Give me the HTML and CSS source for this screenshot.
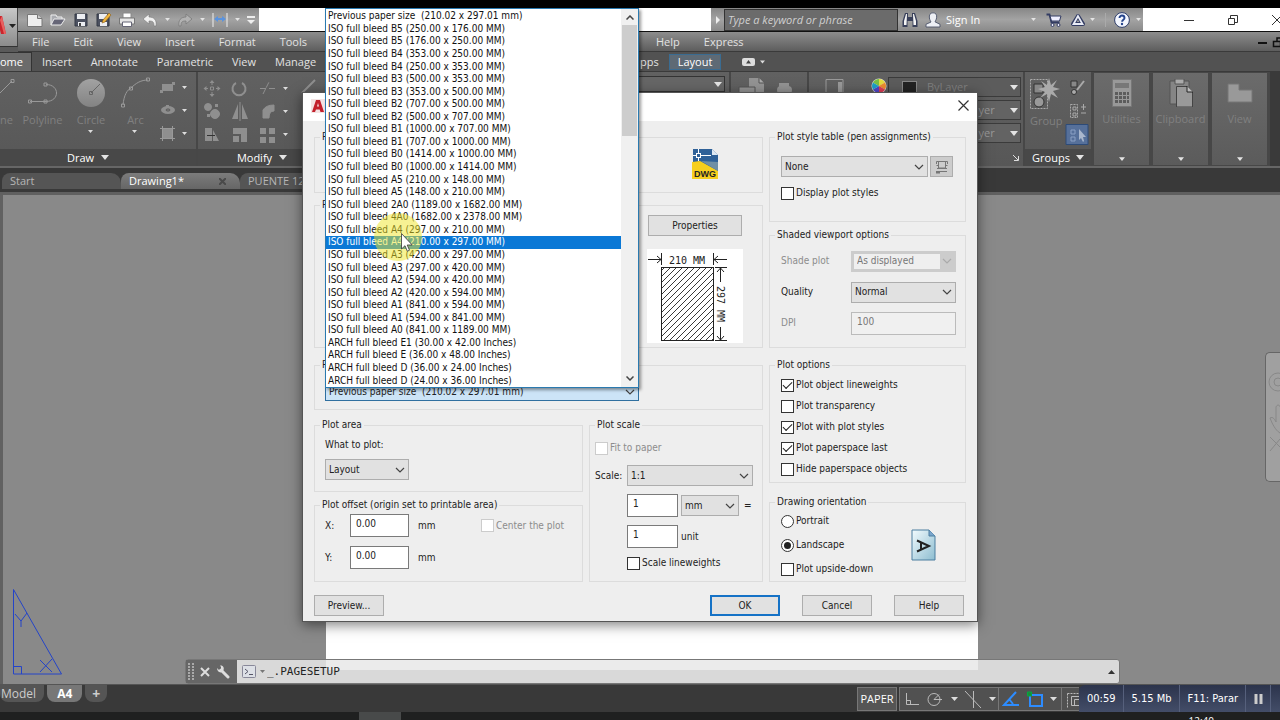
FILE: index.html
```html
<!DOCTYPE html>
<html lang="en">
<head>
<meta charset="utf-8">
<title>Page Setup</title>
<link rel="stylesheet" href="styles.css">
</head>
<body>
<svg class="defs" aria-hidden="true">
  <defs>
    <symbol id="caret" viewBox="0 0 8 5"><path d="M0 0h8L4 5z" fill="#e4e4e4"/></symbol>
    <symbol id="chev" viewBox="0 0 10 6"><path d="M1 1l4 4 4-4" fill="none" stroke="currentColor" stroke-width="1.2"/></symbol>
    <linearGradient id="ig" x1="0" y1="0" x2="0" y2="1"><stop offset="0" stop-color="#a2a2a2"/><stop offset="1" stop-color="#838383"/></linearGradient>
  </defs>
</svg>

<header class="app-head">
  <button class="app-btn" aria-label="Application menu">
    <svg width="18" height="30" viewBox="0 0 18 30"><path d="M0 4l2 0 4 18H1L0 18z" fill="#c9252c"/><path d="M2 4l4 18 -2 0L0 8z" fill="#e8605f"/><path d="M9 12h7l-3.500 4z" fill="#222"/></svg>
  </button>
  <div class="title-row">
    <div class="qat">
      <button aria-label="New"><svg width="16" height="16" viewBox="0 0 16 16"><path d="M.5 2.500h10l4.500 4v8H.5z" fill="#eee" stroke="#777"/><path d="M10.500 2.500v4h4.500" fill="#ccc" stroke="#777"/></svg></button>
      <button aria-label="Open"><svg width="16" height="16" viewBox="0 0 16 16"><path d="M1 13V3h5l1 2h5v3" fill="#a9abb0" stroke="#eee"/><path d="M1 13l3-6h11l-4 6z" fill="#667" stroke="#eee"/></svg></button>
      <button aria-label="Save"><svg width="16" height="16" viewBox="0 0 16 16"><path d="M2 2h12v12H2z" fill="#4c5160" stroke="#333845"/><path d="M4 2h8v5H4zM5 10h7v4H5z" fill="#eceef2"/><path d="M6 11h2v3H6z" fill="#444"/></svg></button>
      <button aria-label="Save as"><svg width="16" height="16" viewBox="0 0 16 16"><path d="M1 2h12v12H1z" fill="#4c5160" stroke="#333845"/><path d="M3 2h8v5H3zM4 10h7v4H4z" fill="#eceef2"/><path d="M6 11l1-3 6-7 2 2-6 7z" fill="#f0b53c" stroke="#875a1c" stroke-width=".6"/></svg></button>
      <button aria-label="Print"><svg width="16" height="16" viewBox="0 0 16 16"><path d="M4 1h8v5H4z" fill="#fff" stroke="#888"/><path d="M.5 6h15v6H.5z" fill="#e6e6e6" stroke="#777"/><path d="M3.500 10h9v4.500h-9z" fill="#fff" stroke="#667"/></svg></button>
      <button aria-label="Undo"><svg width="16" height="16" viewBox="0 0 16 16"><path d="M1 7l6-5v3c5 0 8 3 7 9h-2c0-4-1-5-5-5v3z" fill="#f0f0f0" stroke="#777" stroke-width=".6"/></svg></button>
      <button class="slim" aria-label="Undo list"><svg width="5" height="3"><use href="#caret"/></svg></button>
      <button aria-label="Redo"><svg width="16" height="16" viewBox="0 0 16 16"><path d="M15 7L9 2v3c-5 0-8 3-7 9h2c0-4 1-5 5-5v3z" fill="#b2b2b2" stroke="#7a7a7a" stroke-width=".8"/></svg></button>
      <button class="slim" aria-label="Redo list"><svg width="5" height="3"><use href="#caret"/></svg></button>
      <button aria-label="Dimension"><svg width="16" height="16" viewBox="0 0 16 16"><path d="M1 1v14M15 1v14" stroke="#eee"/><path d="M2 7l4-3v2h4V4l4 3-4 3V8H6v2z" fill="#5b93dd"/></svg></button>
      <button class="slim" aria-label="Dimension list"><svg width="5" height="3"><use href="#caret"/></svg></button>
      <button class="slim wide" aria-label="Customize"><svg width="8" height="8" viewBox="0 0 8 8"><path d="M0 0h8v2H0zM0 4h8L4 8z" fill="#eee"/></svg></button>
    </div>
    <div class="title-gap"></div>
    <div class="info">
      <button class="info-arrow" aria-label="Collapse search"><svg width="4" height="8" viewBox="0 0 4 8"><path d="M0 0l4 4-4 4z" fill="#eee"/></svg></button>
      <input class="search" type="text" placeholder="Type a keyword or phrase" aria-label="Search">
      <button class="find" aria-label="Find"><svg width="16" height="16" viewBox="0 0 16 16"><path d="M3 1h3v4h4V1h3l2.500 8v6h-5V9h-5v6h-5V9z" fill="#39405a"/><path d="M4 2l1 0-.5 11H2V9zM11 2l1 0 2 7v4h-2.500z" fill="#f4f4f4"/></svg></button>
      <button class="sign"><svg width="16" height="16" viewBox="0 0 16 16"><path d="M8 .8c3 0 4 2 3.600 5-.3 2-1.200 3-1.600 4l5 2.500V15H1v-2.700L6 10C5.600 9 4.700 8 4.400 6 4 3 5 .8 8 .8z" fill="#eef0f5" stroke="#4a5168" stroke-width=".9"/></svg><span>Sign In</span><svg width="5" height="3"><use href="#caret"/></svg></button>
      <button aria-label="Store"><svg width="16" height="14" viewBox="0 0 16 14"><path d="M.5 1.500h3l2 8h8" fill="none" stroke="#333c63" stroke-width="1.800"/><path d="M4 3h11l-1.500 5H5.500z" fill="#eef" stroke="#333c63"/><circle cx="6.500" cy="12" r="1.500" fill="#eef" stroke="#333c63"/><circle cx="12.500" cy="12" r="1.500" fill="#eef" stroke="#333c63"/></svg></button>
      <button class="apps" aria-label="App store"><svg width="16" height="14" viewBox="0 0 16 14"><path d="M8 3L3 11h10z" fill="none" stroke="#333c63" stroke-width="4" stroke-linejoin="round"/><path d="M8 3L3.500 11h9z" fill="none" stroke="#e9ecf6" stroke-width="1.800"/></svg><svg width="5" height="3"><use href="#caret"/></svg></button>
      <button class="help" aria-label="Help"><svg width="16" height="16" viewBox="0 0 16 16"><circle cx="8" cy="8" r="7.400" fill="#f4f7ff" stroke="#2e3d69"/><path d="M5.500 6c0-3.300 5-3.200 5 0 0 1.700-2.400 1.800-2.400 3.700" fill="none" stroke="#26458d" stroke-width="1.900"/><circle cx="8" cy="12" r="1.200" fill="#26458d"/></svg><svg width="5" height="3"><use href="#caret"/></svg></button>
    </div>
    <div class="win">
      <button aria-label="Minimize"><svg width="10" height="10"><path d="M0 5.500h10" stroke="#333"/></svg></button>
      <button aria-label="Restore"><svg width="10" height="10"><path d="M.5 3.500h6v6h-6zM2.500 3.500v-3h7v7H6.500" fill="none" stroke="#333"/></svg></button>
      <button aria-label="Close"><svg width="10" height="10"><path d="M0 0l10 10M10 0L0 10" stroke="#333"/></svg></button>
    </div>
  </div>
  <nav class="menu">
    <div class="menu-first"><a href="#">File</a><a href="#">Edit</a><a href="#">View</a><a href="#">Insert</a><a href="#">Format</a><a href="#">Tools</a></div>
    <div class="menu-more"><a href="#">Help</a><a href="#">Express</a></div>
    <svg class="doc-ctl" width="22" height="12"><path d="M0 7h9" stroke="#111" stroke-width="2"/><path d="M15.500 5.500h7v5h-7zM19 5V2h5" fill="none" stroke="#111" stroke-width="1.500"/></svg>
  </nav>
</header>

<nav class="tabs">
  <div class="tabs-first"><a class="on" href="#">ome</a><a href="#">Insert</a><a href="#">Annotate</a><a href="#">Parametric</a><a href="#">View</a><a href="#">Manage</a></div>
  <div class="tabs-more"><a href="#">pps</a><a class="layout" href="#">Layout</a>
    <svg width="23" height="8" viewBox="0 0 23 8"><rect width="13" height="8" rx="2" fill="#ddd"/><path d="M4 5.500h5L6.500 2z" fill="#444"/><path d="M18 2.500h5l-2.500 3z" fill="#ddd"/></svg></div>
</nav>

<section class="ribbon">
  <div class="panel draw">
    <div class="tools">
      <svg width="196" height="74" viewBox="0 0 196 74" fill="none" stroke="#999">
        <path d="M0 21L12 9M11 7.500h3v3h-3zM30 29.500h16c14 0 14-17 0-17M28.500 28h3v3h-3zM44 28h3v3h-3zM44 11h3v3h-3z"/>
        <circle cx="91" cy="21" r="14" fill="url(#ig)" stroke="none"/><path d="M91 21l9-9M89.500 19.500h3v3h-3z" stroke="#666"/>
        <path d="M123 33c1-10 4-15 8-17 5-5 10-8 17-8M121.500 32h3v3h-3zM129.500 15h3v3h-3zM146.500 6h3v3h-3z"/>
        <g fill="#8f8f8f" stroke="none"><path d="M162 12h11v7h-11zM160 18h3v3h-3zM172 10h3v3h-3z"/><ellipse cx="168" cy="38" rx="7" ry="4"/><path d="M166 33h3v2h-3z"/><path d="M163 57h9v9h-9z"/></g>
        <ellipse cx="168" cy="38" rx="2" ry="1" stroke="#555"/><path d="M160 56.500h15M160 66.500h15M162.500 54v15M172.500 54v15"/>
        <g fill="#ddd" stroke="none"><path d="M88 58h5l-2.500 3zM132 58h5l-2.500 3zM182 14h5l-2.500 3zM182 37h5l-2.500 3zM182 60h5l-2.500 3z"/></g>
      </svg>
      <div class="captions"><span>ne</span><span>Polyline</span><span>Circle</span><span>Arc</span></div>
    </div>
    <button class="ptitle">Draw <svg width="8" height="5"><use href="#caret"/></svg></button>
  </div>
  <div class="panel modify">
    <svg class="tools" width="128" height="74" viewBox="0 0 128 74" fill="#8f8f8f" stroke="#8f8f8f">
      <path d="M14 8v4M14 19v4M6 15.500h4M18 15.500h4" /><path d="M11.500 10L14 7l2.500 3zM11.500 21l2.500 3 2.500-3zM8.500 13l-3 2.500 3 2.500zM19.500 13l3 2.500-3 2.500z" stroke="none"/><path d="M12.500 14h3v3h-3z" fill="none"/>
      <path d="M38 10a6.500 6.500 0 1 0 6 0" fill="none" stroke-width="2"/><path d="M62 15.500h6M65 21l6-12M71 15.500h7" stroke-dasharray="6 1" fill="none"/><path d="M104 20l13-13" stroke-width="2"/>
      <circle cx="10" cy="34" r="3.500"/><circle cx="17" cy="41" r="4.500"/><path d="M17 31h3v3h-3zM9 41h3v3H9z" stroke="none"/>
      <path d="M40 31v15h-6zM44 31v15h6z" stroke="none"/><path d="M42 29v19"/><path d="M65 45V37q3-5 11-5v6q-5 0-5 7z"/>
      <path d="M7 55h7v13H7zM15 57l6 11h-6z" stroke="none"/><path d="M9 62.500h8" stroke="#333"/><path d="M35 55h14v14h-6v-8h-8zM35 63h6v6h-6z" stroke="none"/>
      <path d="M62 55h6v6h-6zM71 55h6v6h-6zM62 64h6v6h-6zM71 64h6v6h-6z" stroke="none"/>
      <g fill="#ddd" stroke="none"><path d="M85 14h5l-2.500 3zM85 37h5l-2.500 3zM85 60h5l-2.500 3z"/></g>
    </svg>
    <button class="ptitle">Modify <svg width="8" height="5"><use href="#caret"/></svg></button>
  </div>
  <div class="panel fill"></div>
  <div class="panel layers"><div class="layer-box"><svg width="8" height="5"><use href="#caret"/></svg></div></div>
  <div class="panel block">
    <svg width="76" height="30" viewBox="0 0 76 30" fill="#939393"><path d="M18 6h10l5 5v16H18z"/><path d="M28 6v5h5" stroke="#555" fill="#aaa"/><path d="M8 15h16v14H8z" stroke="#555"/><path d="M48 11h10v8H48z"/><circle cx="50" cy="18" r="4"/><circle cx="57" cy="18" r="4"/></svg>
  </div>
  <div class="panel props">
    <svg width="78" height="30" viewBox="0 0 78 30"><path d="M17 7.500h17v22H17z" fill="none" stroke="#999"/><path d="M29 10h4v18h-4z" fill="#999"/><g transform="translate(70 14)"><circle r="7.500" fill="#ddd"/><path d="M0 0V-7A7 7 0 0 1 6 -3.500z" fill="#e5dd3d"/><path d="M0 0L6 -3.500A7 7 0 0 1 6 3.500z" fill="#ee8d2e"/><path d="M0 0L6 3.500A7 7 0 0 1 0 7z" fill="#e13d57"/><path d="M0 0V7A7 7 0 0 1 -6 3.500z" fill="#5147c9"/><path d="M0 0L-6 3.500A7 7 0 0 1 -6 -3.500z" fill="#1d9fc9"/><path d="M0 0L-6 -3.500A7 7 0 0 1 0 -7z" fill="#7ac144"/></g></svg>
    <div class="prop-rows">
      <button class="prop dim"><i class="swatch"></i><span>ByLayer</span><svg width="8" height="5"><use href="#caret"/></svg></button>
      <button class="prop"><span>ByLayer</span><svg width="8" height="5"><use href="#caret"/></svg></button>
      <button class="prop"><span>ByLayer</span><svg width="8" height="5"><use href="#caret"/></svg></button>
      <svg class="launch" width="6" height="6"><path d="M0 0l5 5M5.500 1v4.500H1" fill="none" stroke="#ddd"/></svg>
    </div>
  </div>
  <div class="panel groups">
    <svg class="tools" width="66" height="74" viewBox="0 0 66 74" fill="none" stroke="#aaa">
      <path d="M5.500 6.500h17v29h-17z" stroke-dasharray="2 1"/><path d="M9 11h9v9H9z" fill="#888" stroke="#333"/><circle cx="14" cy="29" r="5" fill="#999" stroke="#333"/>
      <path d="M24 5l2 7 6-5-4 7 7 2-7 2 5 7-7-4-2 8-2-8-7 4 5-6-7-3 7-2-4-6 6 4z" fill="#aaa" stroke="none"/>
      <path d="M46 8h6v6h-6z" fill="#888" stroke="#333"/><circle cx="49" cy="19" r="2.500" fill="#aaa" stroke="#333"/><path d="M52 17l7-9" stroke-width="2"/>
      <path d="M45.500 31.500h7v13h-7z" stroke-dasharray="2 1"/><path d="M48 34h3v3h-3zM48 40h3v3h-3zM56 34h5M58.500 31v6M56 40h5"/>
      <path d="M41 51.500h22v20H41z" fill="#56709a" stroke="#2d4b78"/><path d="M46 57h4v4h-4zM46 64h4v4h-4z" stroke="#8aa0c4"/><path d="M54 56v11l2-2 2 4 1-1-1-4h3z" fill="#a9b7cd" stroke="none"/>
    </svg>
    <span class="cap">Group</span>
    <button class="ptitle">Groups <svg width="8" height="5"><use href="#caret"/></svg></button>
  </div>
  <button class="panel solo"><svg width="20" height="28" viewBox="0 0 20 28"><path d="M.5.5h19v27H.5z" fill="#999" stroke="#777"/><path d="M3 4h14v5H3z" fill="#777"/><path d="M3 13h3v3H3zM7 13h3v3H7zM11 13h3v3h-3zM15 13h2v3h-2zM3 17h3v3H3zM7 17h3v3H7zM11 17h3v3h-3zM15 17h2v3h-2zM3 21h3v3H3zM7 21h3v3H7zM11 21h3v3h-3zM15 21h2v3h-2z" fill="#5c5c5c"/></svg><span>Utilities</span><svg class="down" width="6" height="4"><use href="#caret"/></svg></button>
  <button class="panel solo"><svg width="24" height="28" viewBox="0 0 24 28"><path d="M1 2h19v23H1z" fill="#858585" stroke="#555"/><path d="M6 0h9v5H6z" fill="#aaa" stroke="#555"/><path d="M7.500 7.500h11l5 5V28h-16z" fill="#999" stroke="#444"/><path d="M18 7v6h6" fill="#bbb" stroke="#222"/></svg><span>Clipboard</span><svg class="down" width="6" height="4"><use href="#caret"/></svg></button>
  <button class="panel solo"><svg width="26" height="28" viewBox="0 0 26 28"><path d="M1 5h11v6h13v12H1z" fill="#999" stroke="#777"/></svg><span>View</span><svg class="down" width="6" height="4"><use href="#caret"/></svg></button>
</section>

<nav class="files">
  <a href="#">Start</a>
  <a class="on" href="#">Drawing1*<svg width="7" height="7"><path d="M0 0l7 7M7 0L0 7" stroke="#4a4a4a" stroke-width="2"/></svg></a>
  <a href="#">PUENTE 12</a>
</nav>

<main class="canvas">
  <div class="paper"></div>
  <svg class="ucs" width="52" height="88" fill="none" stroke="#2444c8"><path d="M1.500 1.500v84.500h48zM1.500 78.500h8v7.500M3 26l6 7 6-8M9 33v6M28 72l12 12M28 84l12-13"/></svg>
  <div class="navbar"><svg width="14" height="90" viewBox="0 0 14 90" fill="none" stroke="#888"><circle cx="12" cy="17" r="9"/><circle cx="12" cy="17" r="4"/><path d="M14 68C9 65 6 58 4 53c3-2 5 2 6 4V42c1-3 4-2 4 0M4 72l10 10M4 86l10-12"/></svg></div>
  <div class="cmd">
    <div class="cmd-grip">
      <svg width="6" height="18"><path d="M1 0v18M5 0v18" stroke="#aaa" stroke-width="2" stroke-dasharray="2 1"/></svg>
      <svg width="10" height="10"><path d="M1 1l8 8M9 1L1 9" stroke="#ddd" stroke-width="2"/></svg>
      <svg width="14" height="14" viewBox="0 0 14 14"><path d="M5 5l7 7" stroke="#ddd" stroke-width="3" stroke-linecap="round"/><path d="M1 3l2 2 2-1V2L4 .5C7 0 9 3 7 6S1 7 1 3z" fill="#ddd"/></svg>
    </div>
    <label class="cmd-line"><svg width="24" height="14" viewBox="0 0 24 14"><rect x=".5" y=".5" width="13" height="12" rx="1" fill="#dde0e6" stroke="#889"/><path d="M3 4l3 2.500L3 9M7 9.500h4" fill="none" stroke="#556"/><path d="M18 5h5l-2.500 3z" fill="#777"/></svg><input type="text" value="_.PAGESETUP" aria-label="Command"><svg width="7" height="4"><path d="M0 4h7L3.500 0z" fill="#333"/></svg></label>
  </div>
</main>

<footer class="status">
  <nav class="sheets"><a href="#">Model</a><a class="on" href="#">A4</a><a class="plus" href="#">+</a></nav>
  <button class="paper-btn">PAPER</button>
  <div class="sgroup g1"><svg width="98" height="24" viewBox="0 0 98 24" fill="none" stroke="#bbb"><path d="M6.500 6v11.500H19M6 13.500h4.500V17"/><circle cx="34" cy="12.500" r="6"/><path d="M34 12.500h8M34 12.500l5-5"/><path d="M65 4l16 17M73.500 4v17"/><path d="M51 10h7l-3.500 4zM89 10h7l-3.500 4z" fill="#ddd" stroke="none"/></svg></div>
  <div class="sgroup g2"><svg width="62" height="24" viewBox="0 0 62 24" fill="none" stroke="#2d8cff" stroke-width="2"><path d="M17 5L5 18h15M10 12l4 5"/><path d="M31 8h12v11H31z"/><path d="M28.500 5h4v4h-4z" fill="#1c8b35" stroke="#0a4" stroke-width="1"/><path d="M51 10h7l-3.500 4z" fill="#ddd" stroke="none"/></svg></div>
  <div class="sgroup g3"><svg width="20" height="20" fill="none" stroke="#bbb"><path d="M5.500 4.500h14M5.500 4.500v14" stroke-dasharray="2 1"/><path d="M9.500 7.500h10v9h-10zM12.500 10.500h7v6h-7z"/></svg></div>
  <div class="rec"><span>00:59</span><span>5.15 Mb</span><span>F11: Parar</span><span><svg width="9" height="10"><path d="M2 0v10M7 0v10" stroke="#ccc" stroke-width="3"/></svg></span></div>
</footer>
<div class="taskbar"><i></i><time>12:40</time></div>

<form class="dialog" aria-label="Page Setup">
  <div class="dlg-title"><svg width="14" height="14" viewBox="0 0 14 14"><rect width="14" height="14" fill="#f3e3e3"/><path d="M1 13L5 1h4l4 12h-3.500l-.8-2.500H5L4 13zM6 7.500h2L7 4z" fill="#c21f2b"/></svg>
    <button type="button" aria-label="Close"><svg width="11" height="11"><path d="M.5.5l10 10M10.500.5l-10 10" stroke="#333" stroke-width="1.200"/></svg></button></div>
  <div class="dlg-body">
    <div class="col">
      <fieldset class="f-page"><legend>P</legend>
        <svg width="28" height="32" viewBox="0 0 28 32"><path d="M2 1h19l6 6v24H2z" fill="#2f6198"/><path d="M21 1l6 6h-6z" fill="#dfe9f3"/><path d="M1 14l8-1 18 10v8H1z" fill="#f7cf1e"/><path d="M10 13l17 1v9z" fill="#6f8fa5"/><path d="M2 7.500h18M7.500 1v12" stroke="#fff"/><rect x="5.500" y="5.500" width="4" height="4" fill="#2f6198" stroke="#fff"/><text x="3" y="29" font-size="9" class="dwg">DWG</text></svg>
      </fieldset>
      <fieldset class="f-print"><legend>P</legend>
        <div class="print-right">
          <button type="button">Properties</button>
          <svg width="96" height="94" viewBox="0 0 96 94" fill="none" stroke="#222">
            <defs><pattern id="hatch" width="6" height="6" patternUnits="userSpaceOnUse"><path d="M-1 7L7 -1M-1 1L1 -1M5 7L7 5" stroke="#222" stroke-width=".9"/></pattern></defs>
            <rect width="96" height="94" fill="#fff" stroke="none"/><rect x="14.500" y="18.500" width="52" height="73" fill="url(#hatch)"/>
            <path d="M14.500 4v12M66.500 4v12M1 10.500h13M10 7l4 3.500-4 3.500M80 10.500H67M71 7l-4 3.500 4 3.500M68 18.500h12M68 91.500h12M73.500 19v14M70 23l3.500-4 3.500 4M73.500 78v13M70 87l3.500 4 3.500-4"/>
            <text x="22" y="15" class="dim-text">210 MM</text><text transform="translate(70 37) rotate(90)" class="dim-text">297 MM</text>
          </svg>
        </div>
      </fieldset>
      <fieldset class="f-paper"><legend>P</legend>
        <div class="paper-size">
          <span class="combo blue"><select aria-label="Paper size"><option>Previous paper size &nbsp;(210.02 x 297.01 mm)</option></select><svg width="10" height="6"><use href="#chev"/></svg></span>
          <div class="list">
            <ul role="listbox" aria-label="Paper sizes">
              <li role="option">Previous paper size &nbsp;(210.02 x 297.01 mm)</li>
              <li role="option">ISO full bleed B5 (250.00 x 176.00 MM)</li>
              <li role="option">ISO full bleed B5 (176.00 x 250.00 MM)</li>
              <li role="option">ISO full bleed B4 (353.00 x 250.00 MM)</li>
              <li role="option">ISO full bleed B4 (250.00 x 353.00 MM)</li>
              <li role="option">ISO full bleed B3 (500.00 x 353.00 MM)</li>
              <li role="option">ISO full bleed B3 (353.00 x 500.00 MM)</li>
              <li role="option">ISO full bleed B2 (707.00 x 500.00 MM)</li>
              <li role="option">ISO full bleed B2 (500.00 x 707.00 MM)</li>
              <li role="option">ISO full bleed B1 (1000.00 x 707.00 MM)</li>
              <li role="option">ISO full bleed B1 (707.00 x 1000.00 MM)</li>
              <li role="option">ISO full bleed B0 (1414.00 x 1000.00 MM)</li>
              <li role="option">ISO full bleed B0 (1000.00 x 1414.00 MM)</li>
              <li role="option">ISO full bleed A5 (210.00 x 148.00 MM)</li>
              <li role="option">ISO full bleed A5 (148.00 x 210.00 MM)</li>
              <li role="option">ISO full bleed 2A0 (1189.00 x 1682.00 MM)</li>
              <li role="option">ISO full bleed 4A0 (1682.00 x 2378.00 MM)</li>
              <li role="option">ISO full bleed A4 (297.00 x 210.00 MM)</li>
              <li role="option" class="sel" aria-selected="true">ISO full bleed A4 (210.00 x 297.00 MM)</li>
              <li role="option">ISO full bleed A3 (420.00 x 297.00 MM)</li>
              <li role="option">ISO full bleed A3 (297.00 x 420.00 MM)</li>
              <li role="option">ISO full bleed A2 (594.00 x 420.00 MM)</li>
              <li role="option">ISO full bleed A2 (420.00 x 594.00 MM)</li>
              <li role="option">ISO full bleed A1 (841.00 x 594.00 MM)</li>
              <li role="option">ISO full bleed A1 (594.00 x 841.00 MM)</li>
              <li role="option">ISO full bleed A0 (841.00 x 1189.00 MM)</li>
              <li role="option">ARCH full bleed E1 (30.00 x 42.00 Inches)</li>
              <li role="option">ARCH full bleed E (36.00 x 48.00 Inches)</li>
              <li role="option">ARCH full bleed D (36.00 x 24.00 Inches)</li>
              <li role="option">ARCH full bleed D (24.00 x 36.00 Inches)</li>
            </ul>
            <div class="sbar"><svg width="8" height="5" viewBox="0 0 8 5"><path d="M.5 4.500L4 1l3.500 3.500" fill="none" stroke="#444" stroke-width="1.500"/></svg><i></i><svg width="8" height="5" viewBox="0 0 8 5"><path d="M.5.5L4 4 7.500.5" fill="none" stroke="#444" stroke-width="1.500"/></svg></div>
            <div class="glow"></div>
            <svg class="cursor" width="12" height="19" viewBox="0 0 12 19"><path d="M.5.500v15.500l3.500-3.300 2.300 5.500 2.200-1-2.300-5.200h5z" fill="#fff" stroke="#333" stroke-width=".8"/></svg>
          </div>
        </div>
      </fieldset>
      <div class="lower">
        <div class="lower-left">
          <fieldset class="f-area"><legend>Plot area</legend>
            <label for="what">What to plot:</label>
            <span class="combo"><select id="what"><option>Layout</option></select><svg width="10" height="6"><use href="#chev"/></svg></span>
          </fieldset>
          <fieldset class="f-offset"><legend>Plot offset (origin set to printable area)</legend>
            <label for="ox">X:</label><input id="ox" type="text" value="0.00"><span>mm</span><label class="chk off"><input type="checkbox" disabled>Center the plot</label>
            <label for="oy">Y:</label><input id="oy" type="text" value="0.00"><span>mm</span>
          </fieldset>
        </div>
        <fieldset class="f-scale"><legend>Plot scale</legend>
          <label class="chk off"><input type="checkbox" disabled>Fit to paper</label>
          <div class="scale-grid">
            <label for="scale">Scale:</label>
            <span class="combo"><select id="scale"><option>1:1</option></select><svg width="10" height="6"><use href="#chev"/></svg></span>
            <div class="pair"><input type="text" value="1" aria-label="Paper units"><span class="combo"><select aria-label="Units"><option>mm</option></select><svg width="10" height="6"><use href="#chev"/></svg></span><span class="eq">=</span></div>
            <div class="pair"><input id="du" type="text" value="1"><label for="du">unit</label></div>
            <label class="chk under"><input type="checkbox">Scale lineweights</label>
          </div>
        </fieldset>
      </div>
    </div>
    <div class="col">
      <fieldset class="f-style"><legend>Plot style table (pen assignments)</legend>
        <div class="style-row"><span class="combo"><select aria-label="Plot style table"><option>None</option></select><svg width="10" height="6"><use href="#chev"/></svg></span>
          <button type="button" aria-label="Edit"><svg width="14" height="14" viewBox="0 0 14 14" fill="none" stroke="#777"><path d="M1.500 4V1.500h11V4M3.500 2v6h7V2M1.500 5.500h2M10.500 5.500h2M2 8.500h10M1 11.500h11" /><path d="M1 12.500h4" stroke-width="2"/></svg></button></div>
        <label class="chk"><input type="checkbox">Display plot styles</label>
      </fieldset>
      <fieldset class="f-shade"><legend>Shaded viewport options</legend>
        <label class="off" for="sp">Shade plot</label><span class="combo gone"><select id="sp" disabled><option>As displayed</option></select><svg width="10" height="6"><use href="#chev"/></svg></span>
        <label for="q">Quality</label><span class="combo"><select id="q"><option>Normal</option></select><svg width="10" height="6"><use href="#chev"/></svg></span>
        <label class="off" for="dpi">DPI</label><input id="dpi" type="text" value="100" disabled>
      </fieldset>
      <fieldset class="f-opts"><legend>Plot options</legend>
        <label class="chk"><input type="checkbox" checked>Plot object lineweights</label>
        <label class="chk"><input type="checkbox">Plot transparency</label>
        <label class="chk"><input type="checkbox" checked>Plot with plot styles</label>
        <label class="chk"><input type="checkbox" checked>Plot paperspace last</label>
        <label class="chk"><input type="checkbox">Hide paperspace objects</label>
      </fieldset>
      <fieldset class="f-orient"><legend>Drawing orientation</legend>
        <div class="orient">
          <div class="orient-opts">
            <label class="chk"><input type="radio" name="o">Portrait</label>
            <label class="chk"><input type="radio" name="o" checked>Landscape</label>
            <label class="chk"><input type="checkbox">Plot upside-down</label>
          </div>
          <svg width="26" height="32" viewBox="0 0 26 32"><defs><linearGradient id="pg" x1="0" y1="0" x2="1" y2="1"><stop offset="0" stop-color="#f2fbfe"/><stop offset="1" stop-color="#8dbdd0"/></linearGradient></defs><path d="M1 1h17l6 6v24H1z" fill="url(#pg)" stroke="#4c7fa0"/><path d="M18 1v6h6" fill="#7aa5cc" stroke="#4c7fa0"/><path d="M6 11.500L18 17 6 22.500M10 13v8" fill="none" stroke="#222" stroke-width="2"/></svg>
        </div>
      </fieldset>
    </div>
  </div>
  <div class="dlg-foot"><button type="button">Preview...</button><span></span><button type="button" class="ok">OK</button><button type="button">Cancel</button><button type="button">Help</button></div>
</form>
</body>
</html>
```
FILE: styles.css
```css
* { box-sizing: border-box; }
body {
  margin: 0; padding-top: 8px; height: 100vh; overflow: hidden; position: relative;
  display: flex; flex-direction: column; background: #000;
  font: 11px/14px "Open Sans", "Noto Sans", sans-serif; color: #e2e2e2;
}
button { font: inherit; color: inherit; background: none; border: 0; padding: 0; }
a { color: inherit; text-decoration: none; }
svg { display: block; flex: none; }
.defs { position: absolute; width: 0; height: 0; }

/* Title bar and menu */
.app-head { display: grid; grid-template: 24px 20px / 18px 1fr; background: #5a5a5a; flex: none; }
.app-btn { grid-row: 1 / 3; height: 39px; background: linear-gradient(#c8c8c8, #8b8b8b); border-right: 1px solid #444; border-bottom: 1px solid #333; }
.title-row { display: flex; background: #fff; border-bottom: 1px solid #111; }
.qat { display: flex; align-items: center; gap: 7px; padding: 0 4px 0 9px; background: linear-gradient(#868686, #a3a3a3 50%, #8a8a8a); }
.qat .slim { width: 5px; }
.qat .wide { width: 8px; }
.title-gap { flex: 1; }
.info { display: flex; align-items: center; width: 432px; background: linear-gradient(#868686, #a3a3a3 50%, #8a8a8a); color: #fff; }
.info-arrow { width: 13px; display: flex; justify-content: center; }
.search { width: 174px; height: 22px; background: #6b6b6b; border: 1px solid #333; padding: 0 3px; font: italic 11px/14px "Open Sans", "Noto Sans", sans-serif; color: #ddd; }
.search::placeholder { color: #d0d0d0; }
.find { margin-left: 4px; }
.sign { display: flex; align-items: center; gap: 5px; margin: 0 10px 0 7px; }
.sign span { width: 80px; text-align: left; }
.apps { display: flex; align-items: center; gap: 4px; margin: 0 8px; padding-right: 10px; border-right: 1px solid #aaa; }
.help { display: flex; align-items: center; gap: 6px; }
.win { display: flex; align-items: center; gap: 34px; width: 137px; padding-left: 41px; overflow: hidden; }
.menu { display: flex; align-items: center; padding-left: 14px; background: linear-gradient(#8d8d8d, #5d5d5d); border-bottom: 1px solid #3a3a3a; }
.menu-first { display: flex; gap: 24px; width: 624px; }
.menu-more { display: flex; gap: 24px; }
.doc-ctl { margin-left: auto; }

/* Ribbon */
.tabs { display: flex; align-items: center; height: 20px; background: #525252; border-bottom: 1px solid #3a3a3a; flex: none; }
.tabs-first { display: flex; gap: 19px; width: 640px; align-items: center; }
.tabs .on { width: 32px; margin-right: -9px; line-height: 18px; background: #6b6b6b; border: 1px solid #333; border-width: 1px 1px 0 0; color: #fff; }
.tabs-more { display: flex; align-items: center; gap: 10px; }
.layout { padding: 0 8px; margin-right: 11px; border: 1px solid #3a6c92; background: #5e6a75; color: #fff; }
.ribbon { display: flex; height: 94px; background: #3a3a3a; flex: none; padding-right: 10px; }
.panel { display: flex; flex-direction: column; background: linear-gradient(#616161, #575757); border-right: 2px solid #474747; }
.tools { height: 76px; }
.draw { width: 198px; }
.modify { width: 130px; }
.ptitle { margin-top: auto; height: 17px; background: #484848; color: #fff; display: flex; align-items: center; justify-content: center; gap: 7px; }
.draw .ptitle { padding-right: 20px; }
.draw .tools { display: grid; }
.draw .tools > * { grid-area: 1 / 1; }
.captions { display: grid; grid-template-columns: 12px 61px 36px 53px; align-self: start; padding-top: 41px; color: #808080; }
.captions span { justify-self: center; }
.captions span:first-child { justify-self: start; }
.fill { flex: 1; }
.layers { width: 103px; }
.layer-box { margin: 4px 4px 0 0; height: 16px; border: 1px solid #333; border-left: 0; display: flex; align-items: center; justify-content: end; padding-right: 2px; background: #666; }
.block { width: 78px; }
.props { width: 216px; flex-direction: row; }
.prop-rows { flex: 1; margin-left: 1px; padding: 5px 2px 0 0; display: flex; flex-direction: column; gap: 3px; }
.prop { height: 20px; display: flex; align-items: center; justify-content: space-between; padding: 0 2px 0 65px; border: 1px solid #3b3b3b; background: #636363; color: #999; }
.prop.dim { padding-left: 13px; color: #808080; background: #5c5c5c; }
.prop.dim span { margin-right: auto; margin-left: 10px; }
.swatch { width: 15px; height: 13px; background: #222; border: 1px solid #888; }
.launch { margin: 9px 2px 0 auto; }
.groups { width: 68px; }
.groups .cap { color: #808080; margin: -34px 0 0 5px; }
.groups .ptitle { gap: 6px; }
.solo { width: 59px; align-items: center; color: #808080; padding-top: 6px; border: 1px solid #474747; border-right-width: 3px; background: linear-gradient(#6b6b6b, #5b5b5b); }
.solo span { margin-top: 5px; }
.solo .down { margin: auto 0 4px; }

/* File tabs */
.files { display: flex; height: 29px; padding: 5px 0 3px 2px; background: #393939; border-top: 2px solid #666; border-bottom: 3px solid #606060; flex: none; }
.files a { display: flex; align-items: center; justify-content: space-between; width: 119px; padding: 0 8px; background: #555; color: #b5b5b5; border-radius: 8px 10px 0 0; }
.files .on { background: linear-gradient(#7c7c7c, #666); color: #fff; padding: 0 14px 0 8px; }

/* Drawing area */
.canvas { flex: 1; position: relative; background: #898989; border-left: 3px solid #616161; overflow: hidden; min-height: 0; }
.paper { position: absolute; left: calc(50% - 316px); width: 652px; top: 0; bottom: 14px; background: #fff; }
.ucs { position: absolute; left: 9px; bottom: 8px; }
.navbar { position: absolute; right: 0; top: 157px; width: 15px; height: 130px; border: 1px solid #666; border-right: 0; border-radius: 5px 0 0 5px; background: #a0a0a0; padding-top: 12px; }
.cmd { position: absolute; left: 182px; right: 160px; bottom: 0; height: 25px; display: flex; border: 1px solid #777; border-radius: 3px; background: rgba(232, 232, 232, 0.85); }
.cmd-grip { width: 51px; display: flex; align-items: center; gap: 6px; padding-left: 2px; background: #666; }
.cmd-line { flex: 1; display: flex; align-items: center; gap: 5px; padding: 0 4px 0 5px; }
.cmd-line input { flex: 1; border: 0; padding: 0; margin-left: -4px; background: none; font: 11px/14px "DejaVu Sans Mono", monospace; color: #222; }

/* Status bar */
.status { height: 28px; display: flex; background: #393939; flex: none; align-items: center; border-top: 1px solid #555; }
.sheets { display: flex; align-self: start; margin-right: auto; line-height: 17px; font-size: 12px; gap: 3px; }
.sheets a { background: #555; padding: 0 8px 0 1px; border-radius: 0 0 8px 8px; color: #ccc; }
.sheets .on { background: #777; color: #fff; font-weight: bold; padding: 0 10px; }
.sheets .plus { padding: 0 7px; font-weight: bold; font-size: 14px; }
.paper-btn { width: 40px; height: 24px; border: 1px solid #777; background: #555; color: #fff; margin-right: 2px; }
.sgroup { height: 24px; border: 1px solid #777; border-right: 0; background: #515151; display: flex; align-items: center; overflow: hidden; }
.g1 { width: 99px; }
.g2 { width: 63px; }
.g3 { width: 18px; }
.rec { width: 201px; height: 27px; display: flex; background: linear-gradient(#2c344c, #434d68); font: 11px/28px "DejaVu Sans Condensed", sans-serif; color: #fff; border-radius: 6px 0 0 0; }
.rec span { padding: 0 7px 0 8px; border-right: 1px solid #56607c; display: flex; align-items: center; }
.taskbar { height: 8px; background: #1f2020; overflow: hidden; display: flex; flex: none; justify-content: space-between; padding: 0 66px 0 359px; }
.taskbar i { width: 42px; background: #484a4a; }
.taskbar time { padding-top: 2px; color: #fff; font-size: 10px; }

/* Dialog */
.dialog {
  position: absolute; top: 92px; left: calc(50% - 338px); width: 676px;
  border: 1px solid #555; background: #eee; color: #222;
  box-shadow: 0 3px 12px rgba(0, 0, 0, 0.5);
  font: 10px/14px "DejaVu Sans Condensed", "DejaVu Sans", sans-serif;
}
.dialog select, .dialog input { font: inherit; color: inherit; margin: 0; }
.dialog button { border: 1px solid #adadad; background: #e1e1e1; }
.dlg-title { height: 28px; background: #fff; display: flex; align-items: center; justify-content: space-between; padding: 0 8px 3px; }
.dialog .dlg-title button { border: 0; background: none; }
.dlg-body { display: grid; grid-template-columns: 1fr 197px; gap: 6px; padding: 9px 11px 0; }
.col { display: flex; flex-direction: column; }
fieldset { margin: 0; padding: 0; border: 1px solid #dcdcdc; min-width: 0; }
legend { margin-left: 5px; padding: 0 2px; }
.off { color: #8c8c8c; }
.combo { display: grid; align-items: center; }
.combo select, .combo svg { grid-area: 1 / 1; }
.combo select { appearance: none; width: 100%; height: 21px; border: 1px solid #adadad; border-radius: 0; background: #e1e1e1; padding: 0 3px; }
.combo svg { justify-self: end; margin-right: 4px; pointer-events: none; color: #444; }
.dialog input[type="text"] { height: 23px; border: 1px solid #7a7a7a; background: #fff; padding: 0 5px 4px; width: 100%; }
.chk { display: flex; align-items: center; gap: 2px; height: 14px; white-space: nowrap; }
.chk input { appearance: none; flex: none; width: 13px; height: 13px; border: 1px solid #333; background: #fff; display: grid; place-content: center; }
.chk input:disabled { border-color: #ccc; }
.chk input[type="checkbox"]:checked::before { content: ""; width: 8px; height: 4px; border: solid #222; border-width: 0 0 1px 1px; transform: rotate(-45deg) translate(1px, -1px); }
.chk input[type="radio"] { border-radius: 50%; }
.chk input[type="radio"]:checked::before { content: ""; width: 7px; height: 7px; border-radius: 50%; background: #222; }

.f-page { height: 63px; }
.f-page svg { margin: 4px 43px 0 auto; }
.dwg { font-family: "Liberation Sans", sans-serif; font-weight: bold; fill: #222; }
.f-print { height: 150px; margin-top: 5px; }
.print-right { display: flex; flex-direction: column; align-items: center; gap: 13px; width: 96px; margin: 3px 19px 0 auto; }
.print-right button { width: 94px; height: 21px; }
.dim-text { font: 10px "DejaVu Sans Mono", monospace; fill: #222; stroke: none; }
.f-paper { height: 52px; margin-top: 10px; }
.paper-size { position: relative; width: 314px; margin: 8px 0 0 10px; }
.blue select { background: #cce4f7; border-color: #2f6f9f; padding-top: 3px; }
.blue svg { margin-top: 3px; }
.list {
  position: absolute; left: 0; right: 0; bottom: 13px; height: 380px; display: flex;
  background: #fff; border: 1px solid #2a7ab0; color: #111; box-shadow: 2px 2px 3px rgba(0, 0, 0, 0.4);
}
.list ul { flex: 1; margin: 0; padding: 1px 0 0; list-style: none; display: flex; flex-direction: column; }
.list li { flex: 1; min-height: 0; display: flex; align-items: center; padding-left: 2px; line-height: 12px; white-space: pre; }
.list .sel { background: #0a78d6; color: #fff; }
.sbar { width: 17px; background: #f0f0f0; display: flex; flex-direction: column; align-items: center; padding: 6px 0; }
.sbar i { width: 15px; height: 111px; margin: 5px 0 auto; background: #cdcdcd; }
.glow { position: absolute; left: 48px; top: 204px; width: 48px; height: 48px; border-radius: 50%; background: rgba(240, 230, 40, 0.5); }
.cursor { position: absolute; left: 75px; top: 224px; }

.lower { display: grid; grid-template-columns: 1fr 174px; gap: 6px; margin-top: 8px; }
.lower-left { display: flex; flex-direction: column; gap: 6px; }
.f-area { height: 74px; padding-left: 10px; }
.f-area legend, .f-offset legend { margin-left: -5px; }
.f-area label { display: block; margin: 6px 0 7px; }
.f-area .combo { width: 84px; }
.f-offset { height: 84px; padding: 2px 0 0 10px; display: grid; grid-template-columns: 16px 59px 54px 1fr; grid-template-rows: 23px 23px; column-gap: 9px; row-gap: 9px; align-items: center; }
.f-scale { padding-left: 5px; height: 164px; }
.f-scale legend { margin-left: 0; }
.f-scale > .chk { margin: 9px 0 10px; }
.scale-grid { display: grid; grid-template-columns: 32px 1fr; padding-right: 9px; align-items: center; row-gap: 8px; }
.scale-grid .pair, .scale-grid .under { grid-column: 2; }
.pair { display: flex; align-items: center; gap: 3px; }
.dialog .pair input[type="text"] { width: 51px; }
.pair .combo { width: 58px; }
.eq { margin-left: 2px; }

.f-style { height: 92px; padding-left: 11px; }
.f-style legend, .f-shade legend, .f-opts legend, .f-orient legend { margin-left: -6px; }
.style-row { display: grid; grid-template-columns: 1fr 23px; gap: 2px; margin: 12px 12px 9px 0; }
.style-row button { display: grid; place-items: center; background: #ccc; }
.f-shade { height: 120px; margin-top: 6px; padding: 8px 9px 0 11px; display: grid; grid-template-columns: 1fr 105px; grid-auto-rows: 22px; row-gap: 9px; align-items: center; }
.gone select { background: #efefef; border: 3px solid #ccc; border-right-width: 16px; color: #777; opacity: 1; }
.combo.gone svg { color: #aaa; }
.dialog #dpi { background: #f0f0f0; border-color: #bbb; color: #777; }
.f-opts { height: 125px; margin-top: 10px; padding: 6px 0 0 11px; }
.f-opts .chk { margin-bottom: 7px; }
.f-orient { height: 87px; margin-top: 12px; padding: 5px 28px 0 11px; }
.orient { display: flex; justify-content: space-between; align-items: center; }
.orient-opts { display: flex; flex-direction: column; gap: 10px; }
.dlg-foot { display: flex; gap: 22px; padding: 13px 13px 5px 11px; }
.dlg-foot span { flex: 1; }
.dlg-foot button { width: 70px; height: 21px; }
.dialog .dlg-foot .ok { border: 2px solid #1572c6; }
```
